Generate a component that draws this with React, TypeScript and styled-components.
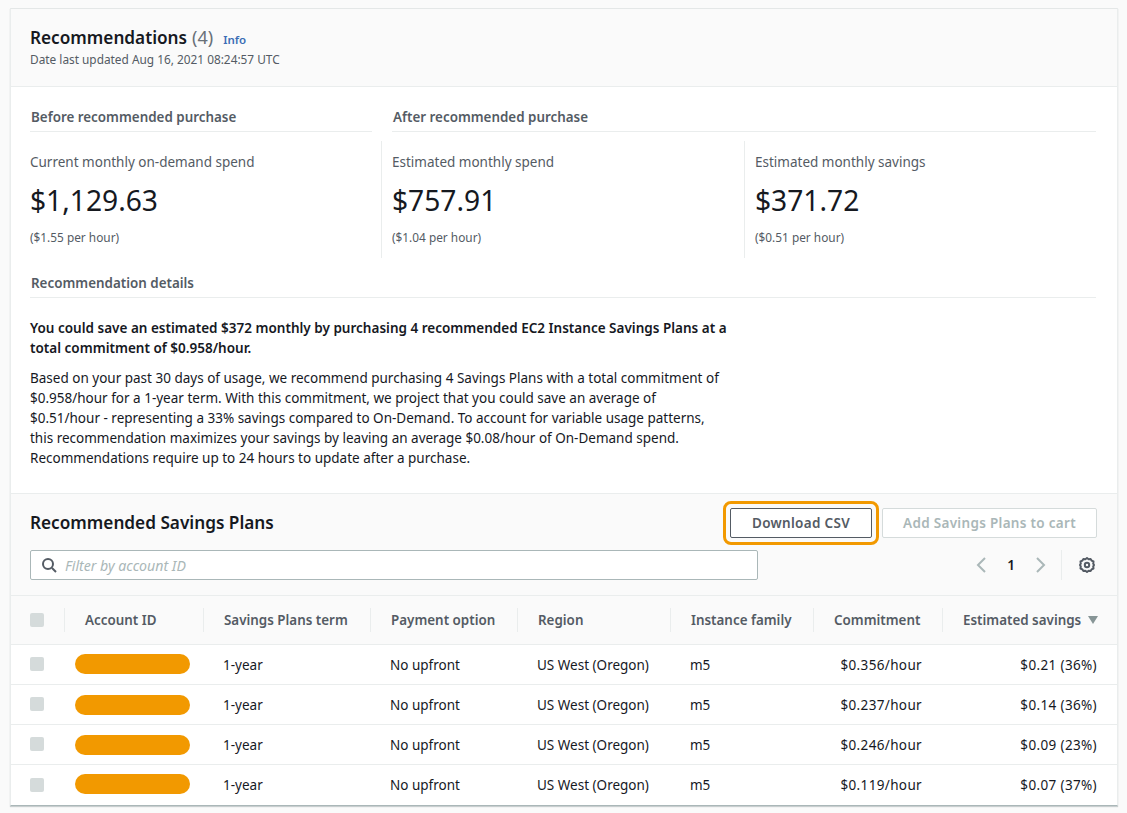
import React from "react";
import styled, { createGlobalStyle } from "styled-components";

const Global = createGlobalStyle`
  html, body { margin: 0; padding: 0; background: #fafafa; }
  body { font-family: "Noto Sans", "Open Sans", sans-serif; color: #16191f; }
  * { box-sizing: border-box; }
`;
const Page = styled.div`
  width: 1127px; height: 813px; padding: 8px 9px 0 10px; overflow: hidden;
`;
const Card = styled.div`
  width: 1108px; height: 798px; background: #fff; border: 1px solid #eaeded; border-top-color: #e4e7e7;
  border-bottom: 1px solid #aab7b8; box-shadow: 0 1px 1px rgba(0,28,36,.2);
  display: flex; flex-direction: column;
`;
const TopHeader = styled.header`
  height: 78px; flex: none; background: #fafafa; border-bottom: 1px solid #eaeded; padding: 15px 19px 0;
`;
const TitleRow = styled.div`display: flex; align-items: baseline; height: 26px;`;
const Title = styled.h2`margin: 0; font-size: 17.2px; line-height: 26px; font-weight: 600; color: #16191f;`;
const Count = styled.span`font-weight: 400; color: #687078; margin-left: 5px; font-size: 18px;`;
const Info = styled.a`font-size: 11.5px; font-weight: 600; margin-left: 10px; color: #3b6db5;`;
const Sub = styled.div`font-size: 11.85px; line-height: 18px; color: #545b64; margin-top: 0;`;
const Body = styled.div`padding: 16px 21px 0 19px; height: 406px; flex: none;`;
const SectionTitles = styled.div`display: grid; grid-template-columns: 342px 704px; column-gap: 20px;`;
const SectionTitle = styled.div`
  font-size: 13.4px; line-height: 20px; font-weight: 600; color: #545b64; padding: 4px 0 5px 1px; height: 29px;
  border-bottom: 1px solid #eaeded;
`;
const Metrics = styled.div`display: grid; grid-template-columns: 351px 363px 352px; margin-top: 9px; height: 117px;`;
const Metric = styled.div<{ $first?: boolean }>`
  padding-left: ${p => (p.$first ? 0 : "10px")};
  border-left: ${p => (p.$first ? "none" : "1px solid #eaeded")};
`;
const MetricLabel = styled.div`font-size: 13.5px; line-height: 20px; color: #545b64; margin-top: 11px;`;
const MetricValue = styled.div`font-size: 28.2px; line-height: 38px; color: #16191f; margin-top: 9px;`;
const MetricNote = styled.div`font-size: 11.85px; line-height: 18px; color: #545b64; margin-top: 9px;`;
const DetailTitle = styled(SectionTitle)`margin-top: 11px; padding-top: 4px; height: 29px;`;
const Bold = styled.p`margin: 20px 0 0; width: 710px; font-size: 13.52px; line-height: 20px; font-weight: 600; color: #16191f;`;
const Para = styled.p`margin: 10px 0 0; width: 720px; font-size: 13.5px; line-height: 20px; color: #16191f; white-space: pre-line;`;
const TableHeader = styled.div`
  height: 103px; flex: none; background: #fafafa; border-top: 1px solid #eaeded; border-bottom: 1px solid #eaeded; padding: 0 20px 0 19px;
`;
const ActionRow = styled.div`display: flex; align-items: center; justify-content: space-between; height: 57px; margin-bottom: -1px;`;
const TableTitle = styled.h3`margin: 0; font-size: 17.2px; font-weight: 600; line-height: 26px;`;
const Actions = styled.div`display: flex; align-items: center; gap: 10px;`;
const Button = styled.div<{ $disabled?: boolean }>`
  height: 30px; display: flex; align-items: center; justify-content: center;
  font-size: 13.5px; font-weight: 600; border-radius: 2px; letter-spacing: 0.3px;
  width: ${p => (p.$disabled ? "215px" : "142px")};
  color: ${p => (p.$disabled ? "#aab7b8" : "#545b64")};
  background: #fff;
  border: 1px solid ${p => (p.$disabled ? "#d5dbdb" : "#545b64")};
`;
const Focus = styled.div`
  border: 3px solid #f29900; border-radius: 8px; padding: 4px;
  margin: -7px -7px -7px 0;
`;
const FilterRow = styled.div`display: flex; justify-content: space-between; align-items: center;`;
const Search = styled.div`
  width: 728px; height: 30px; background: #fff; border: 1px solid #aab7b8; border-radius: 2px;
  display: flex; align-items: center; padding-left: 10px; gap: 8px;
  font-size: 14.15px; font-style: italic; color: #aab7b8;
`;
const Pager = styled.div`display: flex; align-items: center; height: 30px; padding-right: 2px;`;
const PageNum = styled.span`font-size: 13.5px; font-weight: 600; color: #16191f; width: 48px; text-align: center;`;
const Divider = styled.span`width: 1px; height: 30px; background: #eaeded; margin: 0 17px 0 14px;`;
const Row = styled.div<{ $head?: boolean; $last?: boolean }>`
  display: grid; grid-template-columns: 53px 139px 167px 147px 153px 143px 129px 175px;
  align-items: center; flex: none;
  height: ${p => (p.$head ? "49px" : "40px")};
  background: ${p => (p.$head ? "#fafafa" : "#fff")};
  border-bottom: ${p => (p.$last ? "none" : "1px solid #eaeded")};
`;
const Head = styled.div`
  height: 24px; border-left: 1px solid #eaeded; font-size: 13.4px; line-height: 24px; font-weight: 600; color: #545b64;
  padding-left: 20px; white-space: nowrap;
  display: flex; align-items: center;
`;
const CheckCell = styled.div`padding-left: 19px; margin-bottom: 1px; display: flex;`;
const Check = styled.span`display: block; width: 14px; height: 14px; background: #d5dbdb; border-radius: 2px;`;
const Cell = styled.div`
  font-size: 13.5px; line-height: 20px; padding: 0 20px; color: #16191f; white-space: nowrap;
`;
const Amount = styled(Cell)`
  text-align: right; letter-spacing: 0.35px;
`;
const Redact = styled.span<{ $up: boolean }>`
  display: block; width: 115px; height: 20px; border-radius: 10px; background: #f29900;
  margin-left: -9px; margin-top: ${p => (p.$up ? "-2px" : "0")};
`;
const Caret = styled.svg`margin-left: 7px; flex: none;`;

const rows = [
  { commitment: "$0.356/hour", savings: "$0.21 (36%)", up: true },
  { commitment: "$0.237/hour", savings: "$0.14 (36%)", up: false },
  { commitment: "$0.246/hour", savings: "$0.09 (23%)", up: false },
  { commitment: "$0.119/hour", savings: "$0.07 (37%)", up: true },
];

export default function App() {
  return (
    <Page>
      <Global />
      <Card>
        <TopHeader>
          <TitleRow>
            <Title>Recommendations<Count>(4)</Count></Title>
            <Info>Info</Info>
          </TitleRow>
          <Sub>Date last updated Aug 16, 2021 08:24:57 UTC</Sub>
        </TopHeader>
        <Body>
          <SectionTitles>
            <SectionTitle>Before recommended purchase</SectionTitle>
            <SectionTitle>After recommended purchase</SectionTitle>
          </SectionTitles>
          <Metrics>
            <Metric $first>
              <MetricLabel>Current monthly on-demand spend</MetricLabel>
              <MetricValue>$1,129.63</MetricValue>
              <MetricNote>($1.55 per hour)</MetricNote>
            </Metric>
            <Metric>
              <MetricLabel>Estimated monthly spend</MetricLabel>
              <MetricValue>$757.91</MetricValue>
              <MetricNote>($1.04 per hour)</MetricNote>
            </Metric>
            <Metric>
              <MetricLabel>Estimated monthly savings</MetricLabel>
              <MetricValue>$371.72</MetricValue>
              <MetricNote>($0.51 per hour)</MetricNote>
            </Metric>
          </Metrics>
          <DetailTitle>Recommendation details</DetailTitle>
          <Bold>You could save an estimated $372 monthly by purchasing 4 recommended EC2 Instance Savings Plans at a total commitment of $0.958/hour.</Bold>
          <Para>{"Based on your past 30 days of usage, we recommend purchasing 4 Savings Plans with a total commitment of\n$0.958/hour for a 1-year term. With this commitment, we project that you could save an average of\n$0.51/hour - representing a 33% savings compared to On-Demand. To account for variable usage patterns,\nthis recommendation maximizes your savings by leaving an average $0.08/hour of On-Demand spend.\nRecommendations require up to 24 hours to update after a purchase."}</Para>
        </Body>
        <TableHeader>
          <ActionRow>
            <TableTitle>Recommended Savings Plans</TableTitle>
            <Actions>
              <Focus><Button>Download CSV</Button></Focus>
              <Button $disabled>Add Savings Plans to cart</Button>
            </Actions>
          </ActionRow>
          <FilterRow>
            <Search>
              <svg width="16" height="16" viewBox="0 0 16 16" fill="none" stroke="#545b64" strokeWidth="2">
                <circle cx="7" cy="7" r="5" />
                <path d="M11 11l4 4" />
              </svg>
              Filter by account ID
            </Search>
            <Pager>
              <svg width="12" height="16" viewBox="0 0 12 16" fill="none" stroke="#aab7b8" strokeWidth="2"><path d="M10 1L3 8l7 7" /></svg>
              <PageNum>1</PageNum>
              <svg width="12" height="16" viewBox="0 0 12 16" fill="none" stroke="#aab7b8" strokeWidth="2"><path d="M2 1l7 7-7 7" /></svg>
              <Divider />
              <svg width="16" height="16" viewBox="0 0 16 16" fill="none" stroke="#545b64" strokeWidth="2">
                <path d="M8 1l1.6 1.2 2-.3 1 1.7 1.9.9-.3 2L15 8l-.8 1.5.3 2-1.9.9-1 1.7-2-.3L8 15l-1.6-1.2-2 .3-1-1.7-1.9-.9.3-2L1 8l.8-1.5-.3-2 1.9-.9 1-1.7 2 .3z" strokeLinejoin="round" />
                <circle cx="8" cy="8" r="2.2" />
              </svg>
            </Pager>
          </FilterRow>
        </TableHeader>
        <Row $head>
          <CheckCell><Check /></CheckCell>
          <Head>Account ID</Head>
          <Head>Savings Plans term</Head>
          <Head>Payment option</Head>
          <Head>Region</Head>
          <Head>Instance family</Head>
          <Head>Commitment</Head>
          <Head>
            Estimated savings
            <Caret width="10" height="8" viewBox="0 0 10 8"><path d="M0 0h10L5 8z" fill="#879596" /></Caret>
          </Head>
        </Row>
        {rows.map((r, i) => (
          <Row key={r.commitment} $last={i === rows.length - 1}>
            <CheckCell><Check /></CheckCell>
            <Cell><Redact $up={r.up} /></Cell>
            <Cell>1-year</Cell>
            <Cell>No upfront</Cell>
            <Cell>US West (Oregon)</Cell>
            <Cell>m5</Cell>
            <Amount>{r.commitment}</Amount>
            <Amount>{r.savings}</Amount>
          </Row>
        ))}
      </Card>
    </Page>
  );
}
